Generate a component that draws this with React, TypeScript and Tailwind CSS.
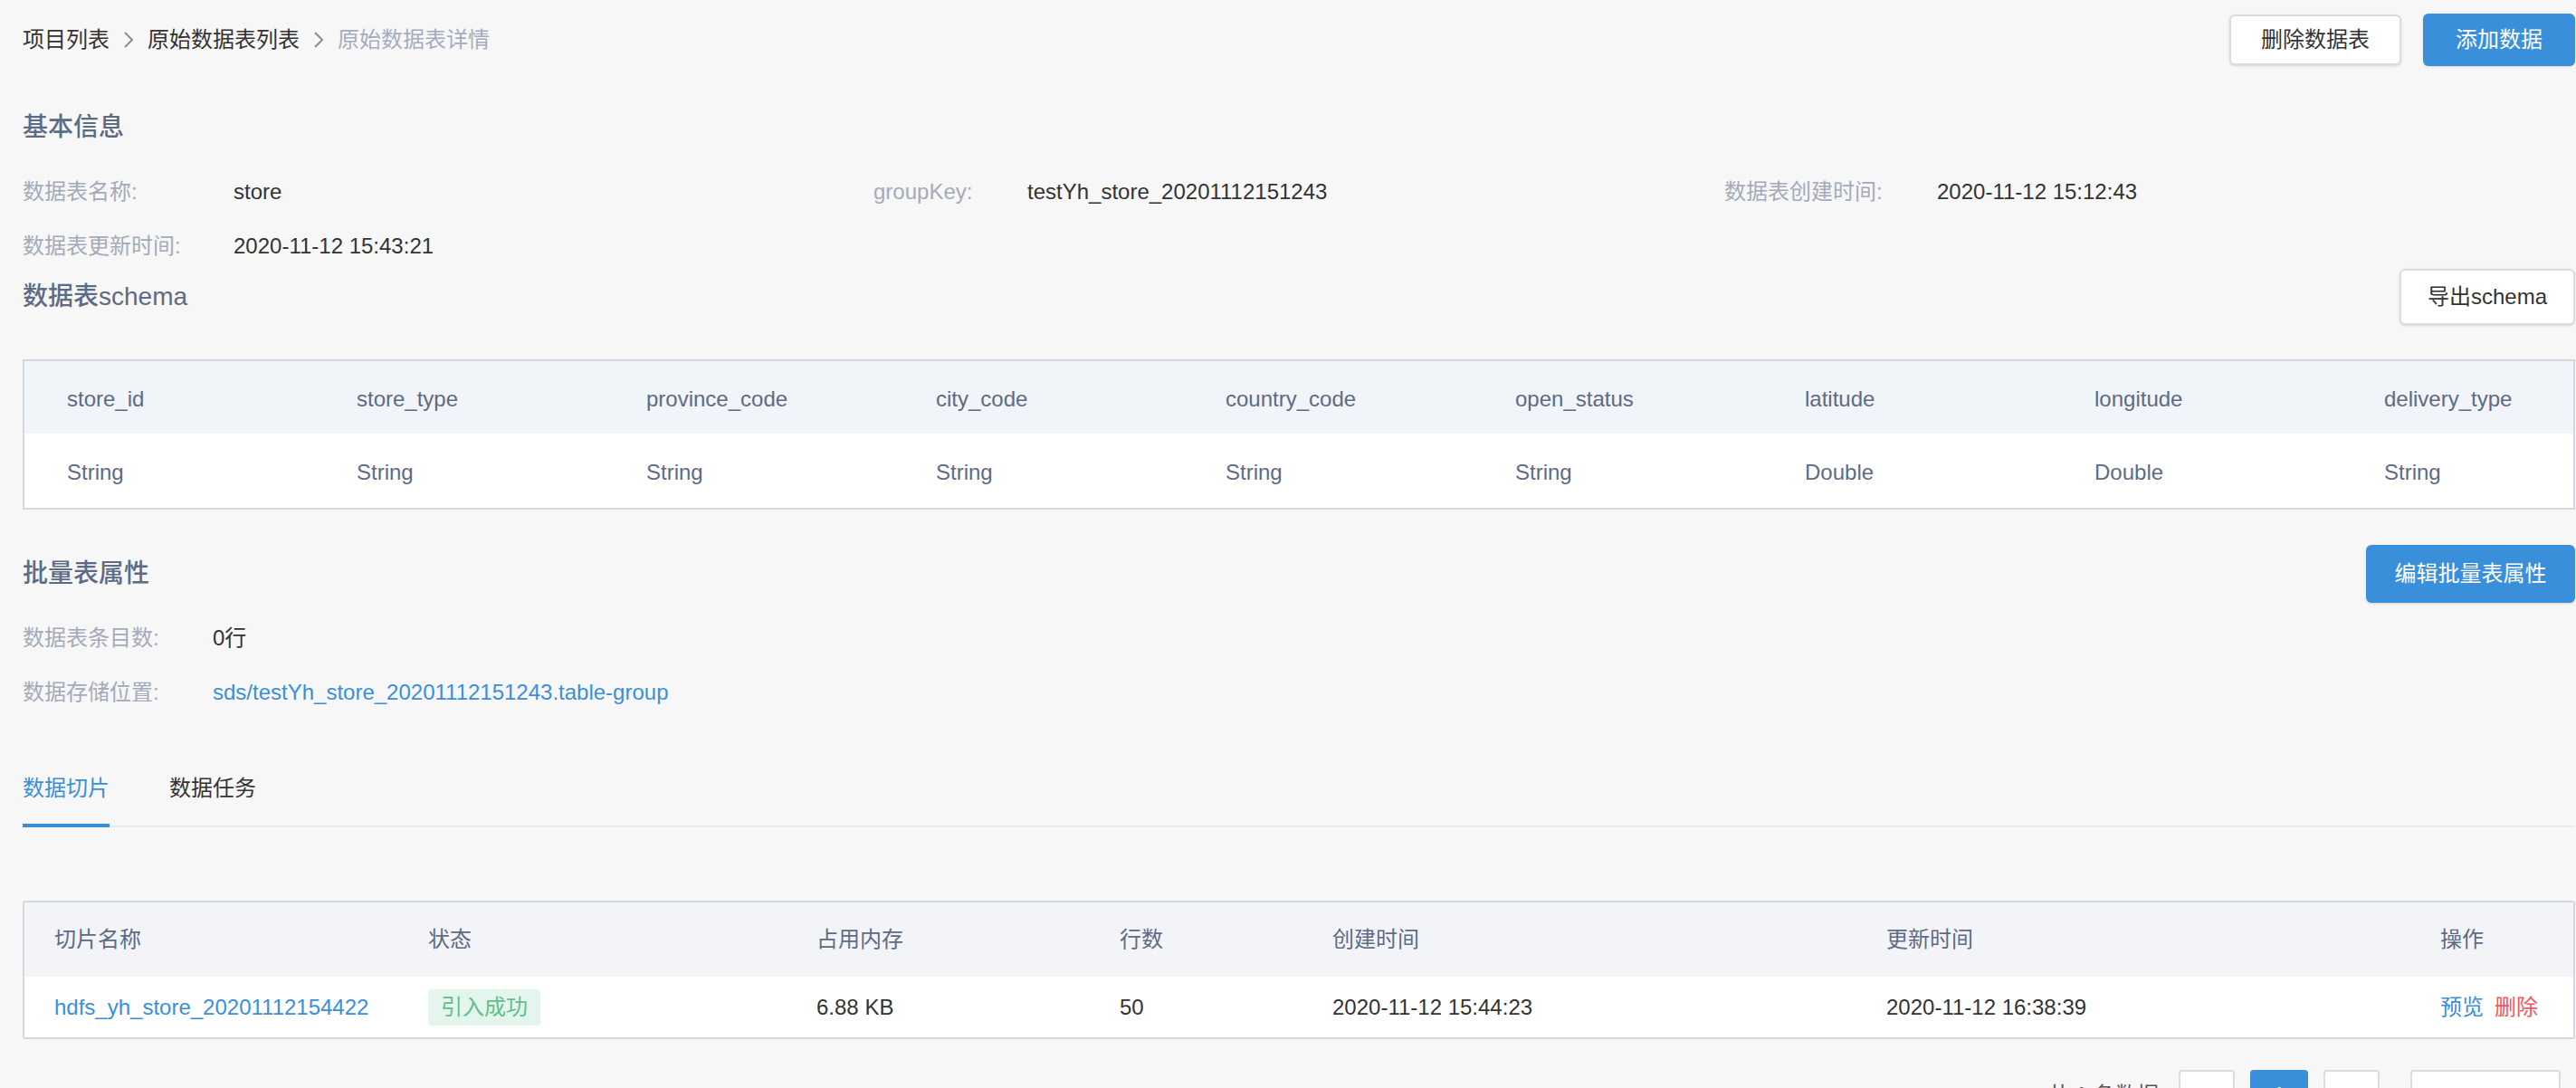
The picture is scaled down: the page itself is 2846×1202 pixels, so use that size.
import React from "react"

const FONT = { fontFamily: '"Liberation Sans", "Noto Sans CJK SC", sans-serif' }

type Info = { label: string; value: string; labelW: string }

const basicRows: Info[][] = [
  [
    { label: "数据表名称:", value: "store", labelW: "w-[233px]" },
    { label: "groupKey:", value: "testYh_store_20201112151243", labelW: "w-[170px]" },
    { label: "数据表创建时间:", value: "2020-11-12 15:12:43", labelW: "w-[235px]" },
  ],
  [{ label: "数据表更新时间:", value: "2020-11-12 15:43:21", labelW: "w-[233px]" }],
]

const schemaCols = [
  "store_id",
  "store_type",
  "province_code",
  "city_code",
  "country_code",
  "open_status",
  "latitude",
  "longitude",
  "delivery_type",
]
const schemaTypes = ["String", "String", "String", "String", "String", "String", "Double", "Double", "String"]

const sliceHeads = ["切片名称", "状态", "占用内存", "行数", "创建时间", "更新时间", "操作"]

function Chevron() {
  return (
    <svg width="14" height="20" viewBox="0 0 14 20" className="mx-[14px] shrink-0">
      <path d="M3 2 L11 10 L3 18" fill="none" stroke="#8d8d8d" strokeWidth="2" />
    </svg>
  )
}

function Heading({ children }: { children: React.ReactNode }) {
  return <h2 className="text-[28px] leading-[40px] font-medium text-[#5d6b85]">{children}</h2>
}

export default function App() {
  return (
    <div className="min-h-screen bg-[#f7f7f7] pl-[25px] pr-[1px] overflow-hidden" style={FONT}>
      {/* top bar */}
      <div className="mt-[15px] flex h-[57px] items-center justify-between">
        <div className="flex items-center text-[24px] leading-none">
          <span className="text-[#333]">项目列表</span>
          <Chevron />
          <span className="text-[#333]">原始数据表列表</span>
          <Chevron />
          <span className="text-[#a4adbf]">原始数据表详情</span>
        </div>
        <div className="flex h-full items-center gap-[24px]">
          <button className="h-[56px] w-[190px] rounded-[6px] border-2 border-[#dcdcdc] bg-white text-[24px] text-[#333] shadow-sm">
            删除数据表
          </button>
          <button className="h-[58px] w-[168px] rounded-[6px] bg-[#3a8fdb] text-[24px] text-white shadow-sm">
            添加数据
          </button>
        </div>
      </div>

      {/* 基本信息 */}
      <div className="mt-[49px]">
        <Heading>基本信息</Heading>
      </div>
      <div className="mt-[31px] flex flex-col gap-[20px]">
        {basicRows.map((row, i) => (
          <div key={i} className="grid grid-cols-3">
            {row.map((it) => (
              <div key={it.label} className="flex h-[40px] items-center text-[24px]">
                <span className={`${it.labelW} shrink-0 text-[#a3abbb]`}>{it.label}</span>
                <span className="text-[#333]">{it.value}</span>
              </div>
            ))}
          </div>
        ))}
      </div>

      {/* schema */}
      <div className="mt-[5px] flex h-[62px] items-center justify-between">
        <Heading>数据表schema</Heading>
        <button className="h-[62px] w-[194px] rounded-[6px] border-2 border-[#dcdcdc] bg-white text-[24px] text-[#333] shadow-sm">
          导出schema
        </button>
      </div>
      <div className="mt-[38px] border-2 border-[#d3d8e0] text-[24px] text-[#5d6b85]">
        <div className="grid h-[80px] grid-cols-[repeat(8,320px)_1fr] items-center bg-[#f1f4f8] pt-[4px]">
          {schemaCols.map((c) => (
            <div key={c} className="pl-[47px]">
              {c}
            </div>
          ))}
        </div>
        <div className="grid h-[82px] grid-cols-[repeat(8,320px)_1fr] items-center bg-white pt-[4px]">
          {schemaTypes.map((t, i) => (
            <div key={i} className="pl-[47px]">
              {t}
            </div>
          ))}
        </div>
      </div>

      {/* 批量表属性 */}
      <div className="mt-[39px] flex h-[64px] items-center justify-between">
        <Heading>批量表属性</Heading>
        <button className="h-[64px] w-[231px] rounded-[6px] bg-[#3a8fdb] text-[24px] text-white shadow-sm">
          编辑批量表属性
        </button>
      </div>
      <div className="mt-[19px] flex h-[40px] items-center text-[24px]">
        <span className="w-[210px] text-[#a3abbb]">数据表条目数:</span>
        <span className="text-[#333]">0行</span>
      </div>
      <div className="mt-[20px] flex h-[40px] items-center text-[24px]">
        <span className="w-[210px] text-[#a3abbb]">数据存储位置:</span>
        <span className="text-[#3a8fdb]">sds/testYh_store_20201112151243.table-group</span>
      </div>

      {/* tabs */}
      <div className="mt-[66px] flex gap-[66px] border-b-2 border-[#ebebeb] text-[24px]">
        <div className="-mb-[2px] flex h-[63px] flex-col border-b-4 border-[#3a8fdb] pb-[19px] text-[#3a8fdb]">
          <span className="leading-[40px]">数据切片</span>
        </div>
        <div className="-mb-[2px] flex h-[63px] flex-col border-b-4 border-transparent pb-[19px] text-[#333]">
          <span className="leading-[40px]">数据任务</span>
        </div>
      </div>

      {/* slice table */}
      <div className="mt-[81px] rounded-[3px] border-2 border-[#d3d8e0] text-[24px]">
        <div className="grid h-[82px] grid-cols-[413px_429px_335px_235px_612px_612px_1fr] items-center bg-[#f3f4f8] text-[#5d6b85]">
          {sliceHeads.map((h) => (
            <div key={h} className="pl-[33px]">
              {h}
            </div>
          ))}
        </div>
        <div className="grid h-[67px] grid-cols-[413px_429px_335px_235px_612px_612px_1fr] items-center bg-white text-[#333]">
          <div className="pl-[33px] text-[#3a8fdb]">hdfs_yh_store_20201112154422</div>
          <div className="pl-[33px]">
            <span className="inline-flex h-[40px] items-center rounded-[4px] bg-[#e3f5ed] px-[14px] text-[#5fc08a]">
              引入成功
            </span>
          </div>
          <div className="pl-[33px]">6.88 KB</div>
          <div className="pl-[33px]">50</div>
          <div className="pl-[33px]">2020-11-12 15:44:23</div>
          <div className="pl-[33px]">2020-11-12 16:38:39</div>
          <div className="flex gap-[12px] pl-[33px]">
            <span className="text-[#3a8fdb]">预览</span>
            <span className="text-[#f5545c]">删除</span>
          </div>
        </div>
      </div>

      {/* pagination */}
      <div className="mt-[34px] mr-[16px] flex items-start justify-end text-[24px] text-[#555]">
        <span className="mr-[22px] leading-[56px]">共 1 条数据</span>
        <button className="h-[56px] w-[62px] rounded-[4px] border-2 border-[#dcdcdc] bg-white" />
        <button className="ml-[17px] h-[56px] w-[64px] rounded-[4px] bg-[#3a8fdb] text-white">1</button>
        <button className="ml-[17px] h-[56px] w-[62px] rounded-[4px] border-2 border-[#dcdcdc] bg-white" />
        <button className="ml-[34px] h-[56px] w-[166px] rounded-[4px] border-2 border-[#dcdcdc] bg-white" />
      </div>
    </div>
  )
}
